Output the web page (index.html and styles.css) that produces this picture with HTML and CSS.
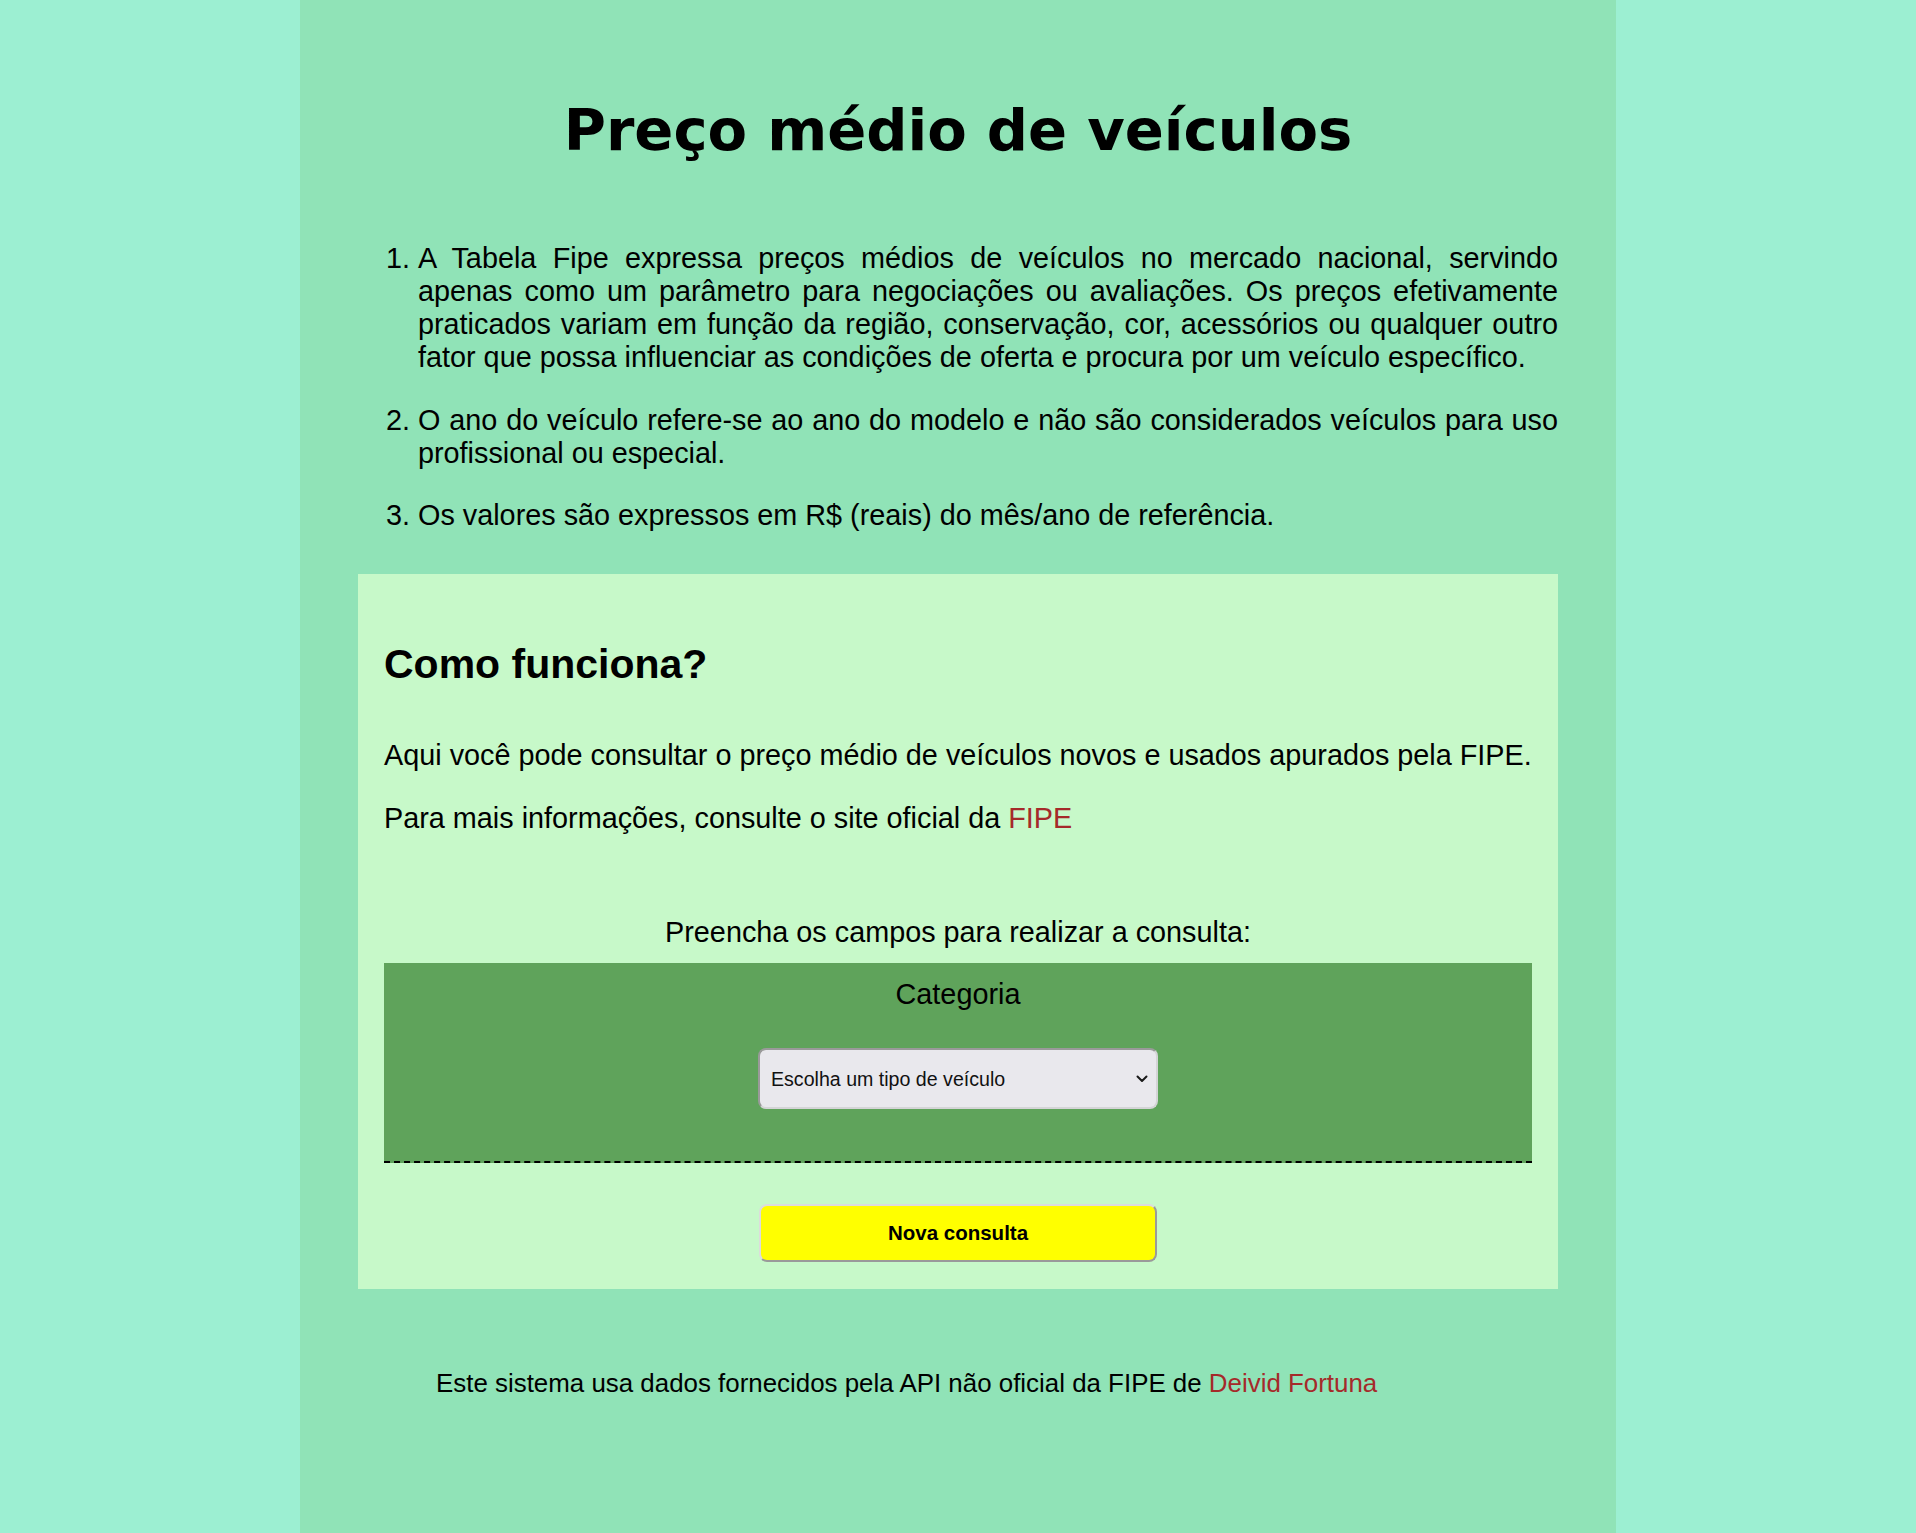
FILE: index.html
```html
<!DOCTYPE html>
<html lang="pt-BR">
<head>
<meta charset="utf-8">
<title>Preço médio de veículos</title>
<link rel="stylesheet" href="styles.css">
</head>
<body>
<main class="page">
  <h1 class="title">Preço médio de veículos</h1>
  <ol class="notes">
    <li>A Tabela Fipe expressa preços médios de veículos no mercado nacional, servindo apenas como um parâmetro para negociações ou avaliações. Os preços efetivamente praticados variam em função da região, conservação, cor, acessórios ou qualquer outro fator que possa influenciar as condições de oferta e procura por um veículo específico.</li>
    <li>O ano do veículo refere-se ao ano do modelo e não são considerados veículos para uso profissional ou especial.</li>
    <li>Os valores são expressos em R$ (reais) do mês/ano de referência.</li>
  </ol>
  <section class="card">
    <h2 class="card-title">Como funciona?</h2>
    <p class="card-text">Aqui você pode consultar o preço médio de veículos novos e usados apurados pela FIPE.</p>
    <p class="card-text card-text-next">Para mais informações, consulte o site oficial da <a class="link" href="#">FIPE</a></p>
    <form class="query">
      <p class="query-hint">Preencha os campos para realizar a consulta:</p>
      <div class="field">
        <label class="field-label" for="cat">Categoria</label>
        <div class="select-wrap">
          <select id="cat" class="select">
            <option>Escolha um tipo de veículo</option>
          </select>
          <svg class="chevron" width="12" height="8" viewBox="0 0 12 8" aria-hidden="true"><path d="M1.5 1.5 L6 6 L10.5 1.5" fill="none" stroke="#1a1a1a" stroke-width="2" stroke-linecap="round" stroke-linejoin="round"/></svg>
        </div>
      </div>
      <button class="btn" type="button">Nova consulta</button>
    </form>
  </section>
  <footer class="footer">Este sistema usa dados fornecidos pela API não oficial da FIPE de <a class="link" href="#">Deivid Fortuna</a></footer>
</main>
</body>
</html>
```
FILE: styles.css
```css
html, body {
  margin: 0;
  padding: 0;
}

body {
  background: #9cefd2;
  font-family: "Liberation Sans", Arial, sans-serif;
  color: #000;
}

.page {
  box-sizing: border-box;
  width: 1316px;
  min-height: 100vh;
  margin: 0 auto;
  padding: 97px 58px 40px;
  background: #90e3b7;
}

.title {
  margin: 0;
  font-family: "DejaVu Sans", Verdana, sans-serif;
  font-weight: bold;
  font-size: 57.6px;
  line-height: 68px;
  text-align: center;
}

.notes {
  margin: 77px 0 0;
  padding-left: 60px;
  font-size: 28.8px;
  line-height: 33px;
  text-align: justify;
}

.notes li + li {
  margin-top: 29.5px;
}

.card {
  margin-top: 42px;
  padding: 26px 26px 27px;
  background: #c7f9c9;
}

.card-title {
  margin: 40px 0 0;
  font-size: 41px;
  line-height: 48px;
  font-weight: bold;
}

.card-text {
  margin: 51px 0 0;
  font-size: 28.8px;
  line-height: 33px;
}

.card-text-next {
  margin-top: 29.5px;
}

.link {
  color: #a52a2a;
  text-decoration: none;
}

.query {
  margin: 81.5px 0 0;
}

.query-hint {
  margin: 0;
  font-size: 28.8px;
  line-height: 33px;
  text-align: center;
}

.field {
  margin-top: 14px;
  padding: 14.5px 0 52px;
  background: #5fa35b;
  border-bottom: 2px dashed #000;
  display: flex;
  flex-direction: column;
  align-items: center;
}

.field-label {
  font-size: 28.8px;
  line-height: 33px;
}

.select-wrap {
  position: relative;
  margin-top: 37.5px;
  width: 400px;
  height: 61px;
}

.select {
  appearance: none;
  -webkit-appearance: none;
  box-sizing: border-box;
  width: 400px;
  height: 61px;
  margin: 0;
  padding: 0 36px 0 11px;
  border: 2px solid;
  border-color: #9a9a9a #d4d4d6 #d4d4d6 #9a9a9a;
  border-radius: 8px;
  background: #e9e8ed;
  font-family: "Liberation Sans", Arial, sans-serif;
  font-size: 19.6px;
  color: #111;
}

.chevron {
  position: absolute;
  right: 10px;
  top: 27px;
  pointer-events: none;
}

.btn {
  display: block;
  box-sizing: border-box;
  width: 398px;
  height: 58px;
  margin: 41px auto 0;
  padding: 0;
  border: 2px solid;
  border-color: #dcdcdc #9a9a9a #9a9a9a #dcdcdc;
  border-radius: 8px;
  background: #ffff00;
  font-family: "Liberation Sans", Arial, sans-serif;
  font-weight: bold;
  font-size: 20.5px;
  color: #000;
}

.footer {
  margin-top: 79px;
  padding-left: 78px;
  font-size: 25.9px;
  line-height: 30px;
}
```
